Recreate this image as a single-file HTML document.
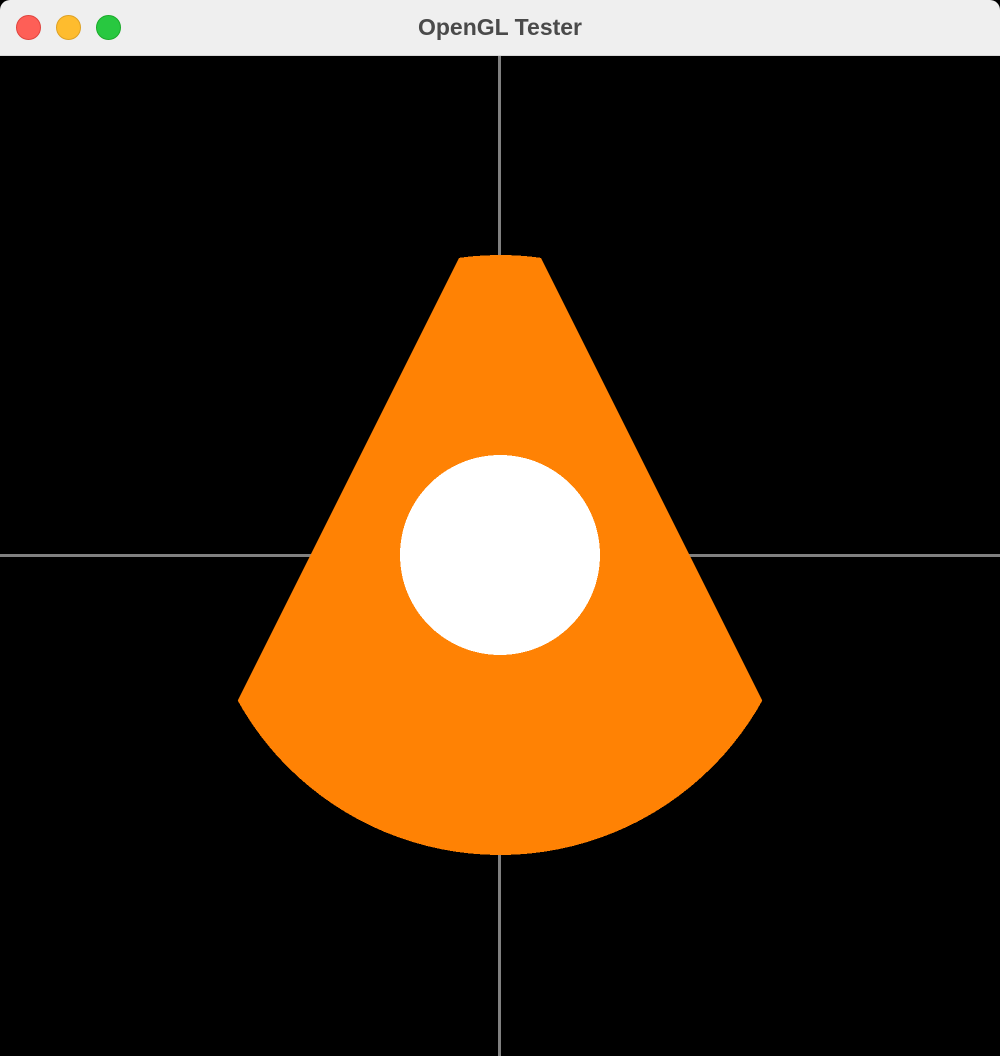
<!DOCTYPE html>
<html><head><style>
html,body{margin:0;padding:0;width:1000px;height:1056px;overflow:hidden;background:#000;}
.win{position:absolute;left:0;top:0;width:1000px;height:1056px;border-radius:10px;overflow:hidden;background:#000;}
.bar{position:absolute;left:0;top:0;width:1000px;height:55px;background:#efefef;border-bottom:1px solid #d8d8d8;}
.b{position:absolute;top:15px;width:23px;height:23px;border-radius:50%;}
.t{position:absolute;left:0;right:0;top:0;height:55px;text-align:center;font:bold 23px "Liberation Sans",sans-serif;line-height:55px;color:#4a4a4a;}
svg{position:absolute;left:0;top:56px;}
</style></head><body>
<div class="win">
<div class="bar">
<div class="b" style="left:16px;background:#fe5f57;border:0.5px solid #e0443e"></div>
<div class="b" style="left:56px;background:#febc2e;border:0.5px solid #dea123"></div>
<div class="b" style="left:96px;background:#28c840;border:0.5px solid #1aab29"></div>
<div class="t">OpenGL Tester</div>
</div>
<svg width="1000" height="1000" viewBox="0 56 1000 1000" shape-rendering="crispEdges">
<defs><clipPath id="w"><polygon points="500,176 -100,1376 1100,1376"/></clipPath></defs>
<rect x="498" y="56" width="3" height="1000" fill="#808080"/>
<rect x="0" y="554" width="1000" height="3" fill="#808080"/>
<circle cx="500" cy="555" r="300" fill="#ff8204" clip-path="url(#w)"/>
<circle cx="500" cy="555" r="100" fill="#fff"/>
</svg>
</div>
</body></html>
